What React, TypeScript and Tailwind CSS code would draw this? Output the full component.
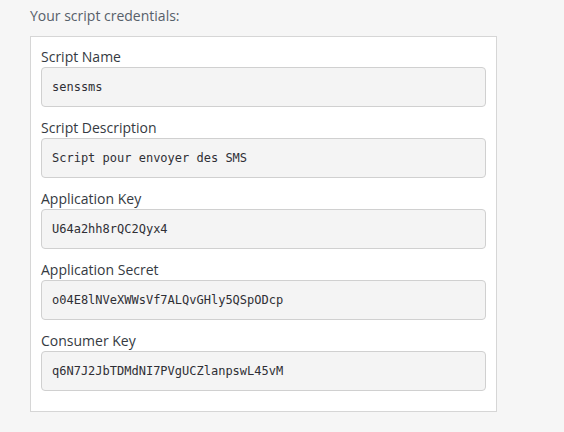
const FIELDS = [
  { label: "Script Name", value: "senssms" },
  { label: "Script Description", value: "Script pour envoyer des SMS" },
  { label: "Application Key", value: "U64a2hh8rQC2Qyx4" },
  { label: "Application Secret", value: "o04E8lNVeXWWsVf7ALQvGHly5QSpODcp" },
  { label: "Consumer Key", value: "q6N7J2JbTDMdNI7PVgUCZlanpswL45vM" },
];

export default function App() {
  return (
    <div className="min-h-[432px] w-full bg-[#f6f6f6] pl-[30px] pt-[6px] font-['Open_Sans',sans-serif]">
      <p className="h-[30px] text-[14px] leading-[20px] text-[#56606a]">Your script credentials:</p>
      <div className="flex w-[467px] flex-col gap-[11px] border border-[#d6d6d6] bg-white px-[10px] pb-[20px] pt-[10px]">
        {FIELDS.map((f) => (
          <div key={f.label} className="flex flex-col">
            <label className="h-[20px] text-[14px] leading-[20px] text-[#353a42]">{f.label}</label>
            <div className="flex h-[40px] items-center rounded-[4px] border border-[#d0d0d0] bg-[#f4f4f4] px-[10px] font-['DejaVu_Sans_Mono',monospace] text-[12px] text-[#2f2f35]">
              {f.value}
            </div>
          </div>
        ))}
      </div>
    </div>
  );
}
